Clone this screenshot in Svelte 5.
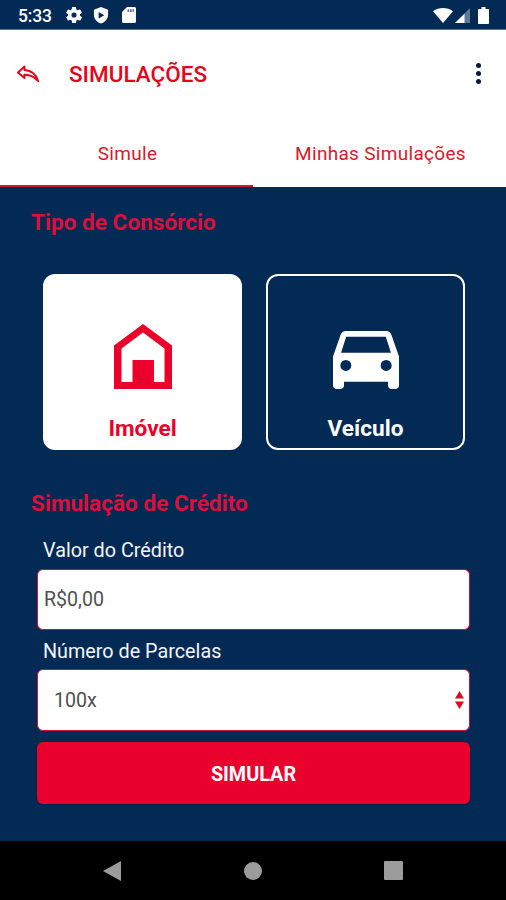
<script>
    let tabs = ['Simule', 'Minhas Simulações'];
    let activeTab = 'Simule';
    let kind = 'imovel';
    let credit = 'R$0,00';
    let installments = '100x';

    function handleSubmit() {

    }
</script>

<div class="screen">
    <div class="status">
        <span class="clock">5:33</span>
        <svg class="gear" viewBox="2 2 20 20" width="16" height="16">
            <path fill="#fff" fill-rule="evenodd" d="M19.4 13a7.5 7.5 0 0 0 0-2l2.1-1.65c.2-.15.24-.42.12-.64l-2-3.46c-.12-.22-.38-.3-.6-.22l-2.5 1a7.3 7.3 0 0 0-1.7-.98l-.38-2.65A.5.5 0 0 0 14 2h-4a.5.5 0 0 0-.49.42l-.38 2.65c-.6.25-1.17.58-1.69.98l-2.5-1c-.22-.08-.48 0-.6.22l-2 3.46c-.13.22-.07.49.12.64L4.6 11a7.5 7.5 0 0 0 0 2l-2.11 1.65c-.2.15-.25.42-.12.64l2 3.46c.12.22.38.3.6.22l2.5-1c.52.4 1.08.73 1.7.98l.38 2.65c.03.24.24.4.49.4h4c.25 0 .46-.16.5-.4l.37-2.65c.6-.25 1.17-.58 1.7-.98l2.5 1c.22.08.47 0 .6-.22l2-3.46c.12-.22.07-.49-.12-.64zM12 15.2a3.2 3.2 0 1 1 0-6.4 3.2 3.2 0 0 1 0 6.4z" />
        </svg>
        <svg class="shield" viewBox="0 0 16 18" width="16" height="17">
            <path fill="#fff" fill-rule="evenodd" d="M8 0l7.500 2.800v5.400c0 4.300-3.200 8-7.500 9.300-4.300-1.300-7.500-5-7.500-9.300V2.800zM5.500 5.200v7L11.500 8.700z" />
        </svg>
        <svg class="sdcard" viewBox="0 0 14 16" width="14" height="16">
            <path fill="#fff" fill-rule="evenodd" d="M5 0h7.500c.8 0 1.500.7 1.500 1.500v13c0 .8-.7 1.500-1.500 1.500h-11C.7 16 0 15.300 0 14.500V5z" />
            <path fill="#5d7391" d="M5.500 2.200h1.700V5H5.500zM8 2.200h1.700V5H8zM10.500 2.200h1.500V5h-1.500z" />
        </svg>
        <span class="spacer"></span>
        <svg viewBox="0 0 20 16" width="20" height="15" preserveAspectRatio="none">
            <path fill="#fff" d="M0 3.500C5.500-1 14.500-1 20 3.500L10 16z" />
        </svg>
        <svg class="signal" viewBox="0 0 15 16" width="15" height="15" preserveAspectRatio="none">
            <path fill="#5c7898" d="M15 0v16H0z" />
            <path fill="#fff" d="M9.500 6v10H0z" />
        </svg>
        <svg class="battery" viewBox="0 0 11 17" width="11" height="17">
            <path fill="#fff" d="M3.500 0h4v2H10c.6 0 1 .4 1 1v13c0 .6-.4 1-1 1H1c-.6 0-1-.4-1-1V3c0-.6.4-1 1-1h2.500z" />
        </svg>
    </div>

    <header>
        <button class="back" aria-label="Voltar">
            <svg viewBox="0 0 24 18" width="24" height="18">
                <path fill="none" stroke="#e3051b" stroke-width="2" stroke-linejoin="round" d="M8.500 1.500L2 7.500l6.500 5.500v-3.200c5.500-.2 9.500 1.500 13.700 6.400C20.500 9.800 15.500 5.600 8.500 5z" />
            </svg>
        </button>
        <h1>SIMULAÇÕES</h1>
        <button class="more" aria-label="Mais opções">
            <span></span>
            <span></span>
            <span></span>
        </button>
    </header>

    <nav class="tabs">
        {#each tabs as tab (tab)}
        <button class="tab" class:active={activeTab === tab} on:click={() => activeTab = tab}>{tab}</button>
        {/each}
    </nav>

    <main>
        <h2 class="kind-title">Tipo de Consórcio</h2>

        <div class="cards">
            <button class="card" class:selected={kind === 'imovel'} on:click={() => kind = 'imovel'}>
                <svg viewBox="0 0 58 65" width="58" height="65">
                    <path fill="currentColor" fill-rule="evenodd" d="M29 0l29 21.500V65H0V21.500zM29 8.500L7.500 24.500V58H18.500V36h21.500V58H50.500V24.500z" />
                </svg>
                <span>Imóvel</span>
            </button>
            <button class="card" class:selected={kind === 'veiculo'} on:click={() => kind = 'veiculo'}>
                <svg viewBox="3 5 18 16" width="66" height="58" preserveAspectRatio="none">
                    <path fill="currentColor" fill-rule="evenodd" d="M18.920 6.010C18.720 5.420 18.160 5 17.500 5h-11c-.66 0-1.210.42-1.420 1.010L3 12v8c0 .55.45 1 1 1h1c.55 0 1-.45 1-1v-1h12v1c0 .55.45 1 1 1h1c.55 0 1-.45 1-1v-8zM6.500 16a1.500 1.500 0 1 1 0-3 1.500 1.500 0 0 1 0 3zm11 0a1.500 1.500 0 1 1 0-3 1.500 1.500 0 0 1 0 3zM5.200 11l1.400-4.400h10.800l1.400 4.400z" />
                </svg>
                <span>Veículo</span>
            </button>
        </div>

        <h2 class="credit-title">Simulação de Crédito</h2>

        <form on:submit|preventDefault={handleSubmit}>
            <label for="credit">Valor do Crédito</label>
            <input id="credit" type="text" bind:value={credit} />

            <label for="installments" class="second">Número de Parcelas</label>
            <div class="select">
                <select id="installments" bind:value={installments}>
                    <option value="100x">100x</option>
                </select>
                <svg viewBox="0 0 9 18" width="9" height="18">
                    <path fill="#dc0a1e" d="M4.500 0L9 7.500H0zM0 10.500h9L4.500 18z" />
                </svg>
            </div>

            <button class="submit" type="submit">SIMULAR</button>
        </form>
    </main>

    <footer>
        <svg viewBox="0 0 18 20" width="18" height="20"><path fill="#9b9b9b" d="M18 0v20L0 10z" /></svg>
        <svg viewBox="0 0 18 18" width="18" height="18"><circle fill="#9b9b9b" cx="9" cy="9" r="9" /></svg>
        <svg viewBox="0 0 19 19" width="19" height="19"><rect fill="#9b9b9b" width="19" height="19" rx="1" /></svg>
    </footer>
</div>

<style>
    :global(body) {
        margin: 0;
    }

    .screen {
        display: flex;
        flex-direction: column;
        width: 506px;
        height: 900px;
        overflow: hidden;
        background-color: #032a55;
        font-family: Roboto, "Liberation Sans", sans-serif;
    }

    button {
        padding: 0;
        border: none;
        background: none;
        font-family: inherit;
        cursor: pointer;
    }

    .status {
        display: flex;
        align-items: center;
        box-sizing: border-box;
        height: 30px;
        padding: 1px 17px 0 18px;
        border-bottom: 1px solid #5f7692;
        background-color: #032a55;
    }

    .clock {
        width: 48px;
        padding-top: 2px;
        color: #fff;
        font-size: 17.500px;
        font-weight: 500;
        line-height: 28px;
        letter-spacing: -0.2px;
    }

    .shield {
        margin-left: 11px;
    }

    .sdcard {
        margin-left: 13px;
    }

    .spacer {
        flex: 1;
    }

    .signal {
        margin-left: 2px;
    }

    .battery {
        margin-left: 8px;
    }

    header {
        display: flex;
        align-items: center;
        height: 88px;
        padding: 0 25px 0 16px;
        background-color: #fff;
    }

    .back {
        display: flex;
        width: 53px;
    }

    h1 {
        flex: 1;
        margin: 0;
        color: #e3051b;
        font-size: 22.500px;
        font-weight: 500;
    }

    .more {
        display: flex;
        flex-direction: column;
        gap: 3px;
        margin-top: -2px;
    }

    .more span {
        width: 5px;
        height: 5px;
        border-radius: 50%;
        background-color: #0b1640;
    }

    .tabs {
        display: flex;
        height: 69px;
        background-color: #fff;
    }

    .tab {
        flex: 1;
        box-sizing: border-box;
        padding: 3px 0 0 2px;
        border-bottom: 2px solid transparent;
        color: #d9182c;
        font-size: 19px;
        letter-spacing: 0.3px;
    }

    .tab.active {
        border-bottom-color: #d01a26;
    }

    main {
        flex: 1;
        padding: 0 36px 0 37px;
    }

    h2 {
        margin: 0 0 0 -6px;
        color: #db0f3a;
        font-size: 22.600px;
        font-weight: 700;
        line-height: 30px;
    }

    .kind-title {
        padding-top: 21px;
    }

    .cards {
        display: flex;
        gap: 24px;
        margin: 36px 5px 0 6px;
    }

    .card {
        display: flex;
        flex: 1;
        flex-direction: column;
        align-items: center;
        justify-content: flex-end;
        box-sizing: border-box;
        height: 176px;
        padding-bottom: 4px;
        border: 2px solid #fff;
        border-radius: 12px;
        color: #fff;
        font-size: 22.600px;
        font-weight: 700;
    }

    .card span {
        margin-top: 25px;
        line-height: 30px;
    }

    .card.selected {
        background-color: #fff;
        color: #ea002a;
    }

    .credit-title {
        margin-top: 39px;
    }

    form {
        display: flex;
        flex-direction: column;
    }

    label {
        margin: 19px 0 6px 6px;
        color: #f4f6fa;
        font-size: 19.800px;
        line-height: 25px;
    }

    .second {
        margin: 9px 0 5px 6px;
    }

    input,
    select {
        width: 100%;
        height: 61px;
        padding: 0 6px;
        box-sizing: border-box;
        border: 1px solid #d01030;
        border-radius: 6px;
        background-color: #fff;
        color: #505050;
        font-family: inherit;
        font-size: 19.600px;
        outline: none;
    }

    .select {
        position: relative;
    }

    select {
        display: block;
        height: 62px;
        padding: 1px 16px 0;
        appearance: none;
    }

    .select svg {
        position: absolute;
        top: 22px;
        right: 6px;
    }

    .submit {
        height: 62px;
        margin-top: 11px;
        padding-top: 2px;
        border-radius: 6px;
        background-color: #ea002c;
        box-shadow: 0 1px 3px rgba(0, 0, 0, 0.3);
        color: #fff;
        font-size: 19.800px;
        font-weight: 700;
    }

    footer {
        display: flex;
        align-items: center;
        justify-content: space-between;
        box-sizing: border-box;
        height: 59px;
        padding: 0 103px;
        background-color: #000;
    }
</style>
